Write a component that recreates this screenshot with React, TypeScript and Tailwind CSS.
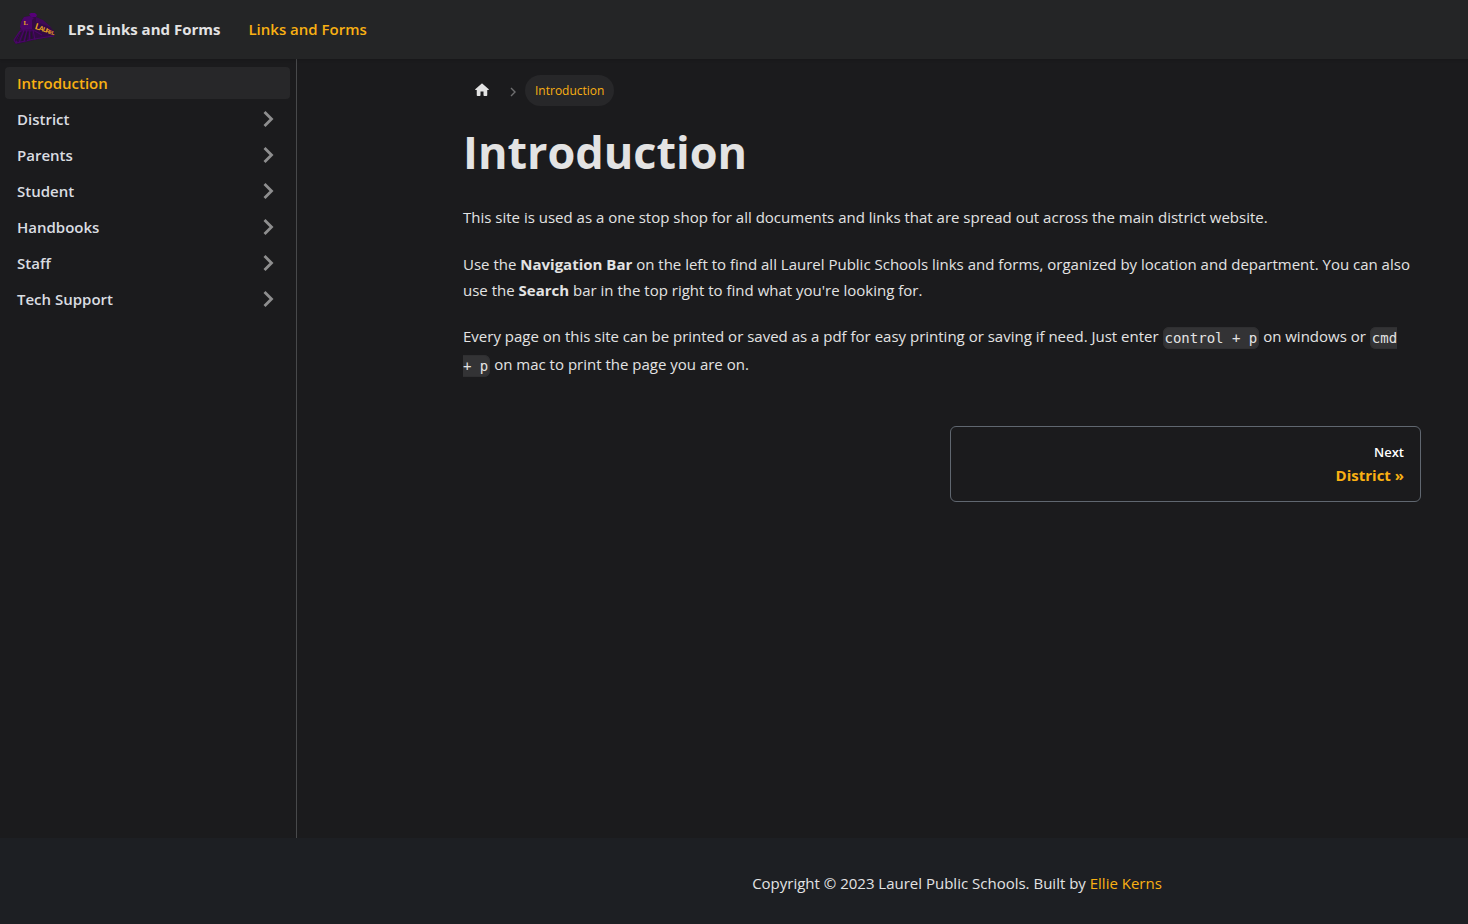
import React from "react";

const sections = ["District", "Parents", "Student", "Handbooks", "Staff", "Tech Support"];

function Logo() {
  return (
    <svg width="44" height="34" viewBox="0 0 44 34" aria-hidden="true">
      <path d="M9 9 L12 5 L18 4 L24 5 L34 11 L42 19 L42 24 L22 28 L5 32 L3 31 L2 28 L8 19 Z" fill="#330a45" />
      <path d="M17 2 L19 1 L23 1 L25 3 L24 5 L19 5 Z" fill="#560078" />
      <path d="M9 10 L12 5 L18 4 L22 6 L20 8 L20 17 L10 18 L8 15 Z" fill="#4a0668" />
      <path d="M24 5 L31 8 L40 16 L33 13 L24 10 Z" fill="#3f0858" />
      <path d="M8 19 L2 28 L4 31 L9 19 M12 18 L7 31 M15 18 L12 30 M18 18 L17 29 M21 18 L23 28 M8 18 L21 18 L30 23 M4 31 L22 27 L42 24" stroke="#4a0668" strokeWidth="1.1" fill="none" />
      <path d="M9 20 L5 29 M13 20 L10 29 M16 20 L14 29 M19 20 L20 27" stroke="#211a27" strokeWidth="1" />
      <text x="11.5" y="12.5" fontSize="6.5" fontWeight="700" fontFamily="Liberation Serif, serif" fill="#f0ac1c">L</text>
      <g fontWeight="700" fontFamily="Liberation Sans, sans-serif" fill="#e9a51d" transform="rotate(18 23 17)">
        <text x="22.5" y="17" fontSize="9">L</text>
        <text x="26.5" y="17" fontSize="7">A</text>
        <text x="30.5" y="17" fontSize="6.5">U</text>
        <text x="34" y="17" fontSize="5.5">R</text>
        <text x="37.3" y="17" fontSize="5">E</text>
        <text x="40" y="17" fontSize="5">L</text>
      </g>
    </svg>
  );
}

function Chevron() {
  return (
    <svg width="20" height="20" viewBox="0 0 20 20" fill="none" stroke="#8e8e8f" strokeWidth="2.8" aria-hidden="true">
      <path d="M6.5 3 L13.5 10 L6.5 17" />
    </svg>
  );
}

function Code({ children }: { children: React.ReactNode }) {
  return (
    <code className="rounded-md border border-[#2f2f31] bg-[#333335] px-px py-[2px] align-middle font-['DejaVu_Sans_Mono',monospace] text-[14px] leading-[18px]">
      {children}
    </code>
  );
}

export default function App() {
  return (
    <div className="flex min-h-screen flex-col bg-[#1b1b1d] font-['Open_Sans',sans-serif] text-[15px] leading-[26px] text-[#e3e3e3]">
      <nav className="z-10 flex h-[59px] items-center bg-[#242526] px-3 pb-[2px] shadow-sm">
        <a href="#" className="flex items-center gap-3 font-bold">
          <Logo />
          LPS Links and Forms
        </a>
        <a href="#links" className="ml-7 font-semibold text-[#f9b013]">Links and Forms</a>
      </nav>

      <div className="flex grow">
        <aside className="w-[297px] shrink-0 border-r border-[#48494b] py-2 pr-[6px] pl-[5px]">
          <ul className="flex flex-col gap-1 font-semibold text-[#dadde1]">
            <li>
              <a href="#introduction" className="flex h-8 items-center rounded bg-[#272729] px-3 text-[#f9b013]">Introduction</a>
            </li>
            {sections.map((name) => (
              <li key={name}>
                <a href={"#" + name} className="flex h-8 items-center justify-between rounded px-3">
                  {name}
                  <Chevron />
                </a>
              </li>
            ))}
          </ul>
        </aside>

        <main className="min-w-0 grow pt-4 pr-[47px] pl-[166px]">
          <nav aria-label="Breadcrumbs" className="flex h-[31px] items-center text-[12px]">
            <a href="#" aria-label="Home page" className="px-[10px] pb-[2px]">
              <svg width="18" height="18" viewBox="0 0 24 24" fill="#e3e3e3" aria-hidden="true">
                <path d="M10 19v-5h4v5c0 .55.45 1 1 1h3c.55 0 1-.45 1-1v-7h1.7c.46 0 .68-.57.33-.87L12.67 3.6c-.38-.34-.96-.34-1.34 0l-8.36 7.53c-.34.3-.13.87.33.87H5v7c0 .55.45 1 1 1h3c.55 0 1-.45 1-1z" />
              </svg>
            </a>
            <svg width="24" height="12" viewBox="0 0 24 12" fill="none" stroke="#6f6f70" strokeWidth="1.4" aria-hidden="true">
              <path d="M10 3 L14 7 L10 11" />
            </svg>
            <span className="flex h-[31px] items-center rounded-full bg-[#272729] px-[10px] text-[#f9b013]">Introduction</span>
          </nav>

          <h1 className="mt-4 text-[45px] leading-[60px] font-bold">Introduction</h1>
          <p className="mt-[22px]">
            This site is used as a one stop shop for all documents and links that are spread out across the main district website.
          </p>
          <p className="mt-[21px]">
            Use the <strong>Navigation Bar</strong> on the left to find all Laurel Public Schools links and forms, organized by location and department. You can also use the <strong>Search</strong> bar in the top right to find what you're looking for.
          </p>
          <p className="mt-[19px] leading-[28px]">
            Every page on this site can be printed or saved as a pdf for easy printing or saving if need. Just enter <Code>control + p</Code> on windows or <Code>cmd <span className="whitespace-nowrap">+ p</span></Code> on mac to print the page you are on.
          </p>

          <nav aria-label="Docs pages" className="mt-12 grid grid-cols-2 gap-4">
            <a href="#District" className="col-start-2 rounded-md border border-[#606770] px-4 pt-[15px] pb-4 text-right leading-5">
              <span className="block text-[13px] font-semibold text-white">Next</span>
              <span className="mt-[3px] block font-bold text-[#f9b013]">District »</span>
            </a>
          </nav>
        </main>
      </div>

      <footer className="flex h-[86px] items-center justify-center bg-[#1d1f23] pt-1 pl-[446px]">
        <p>
          Copyright © 2023 Laurel Public Schools. Built by <a href="#author" className="text-[#f9b013]">Ellie Kerns</a>
        </p>
      </footer>
    </div>
  );
}
